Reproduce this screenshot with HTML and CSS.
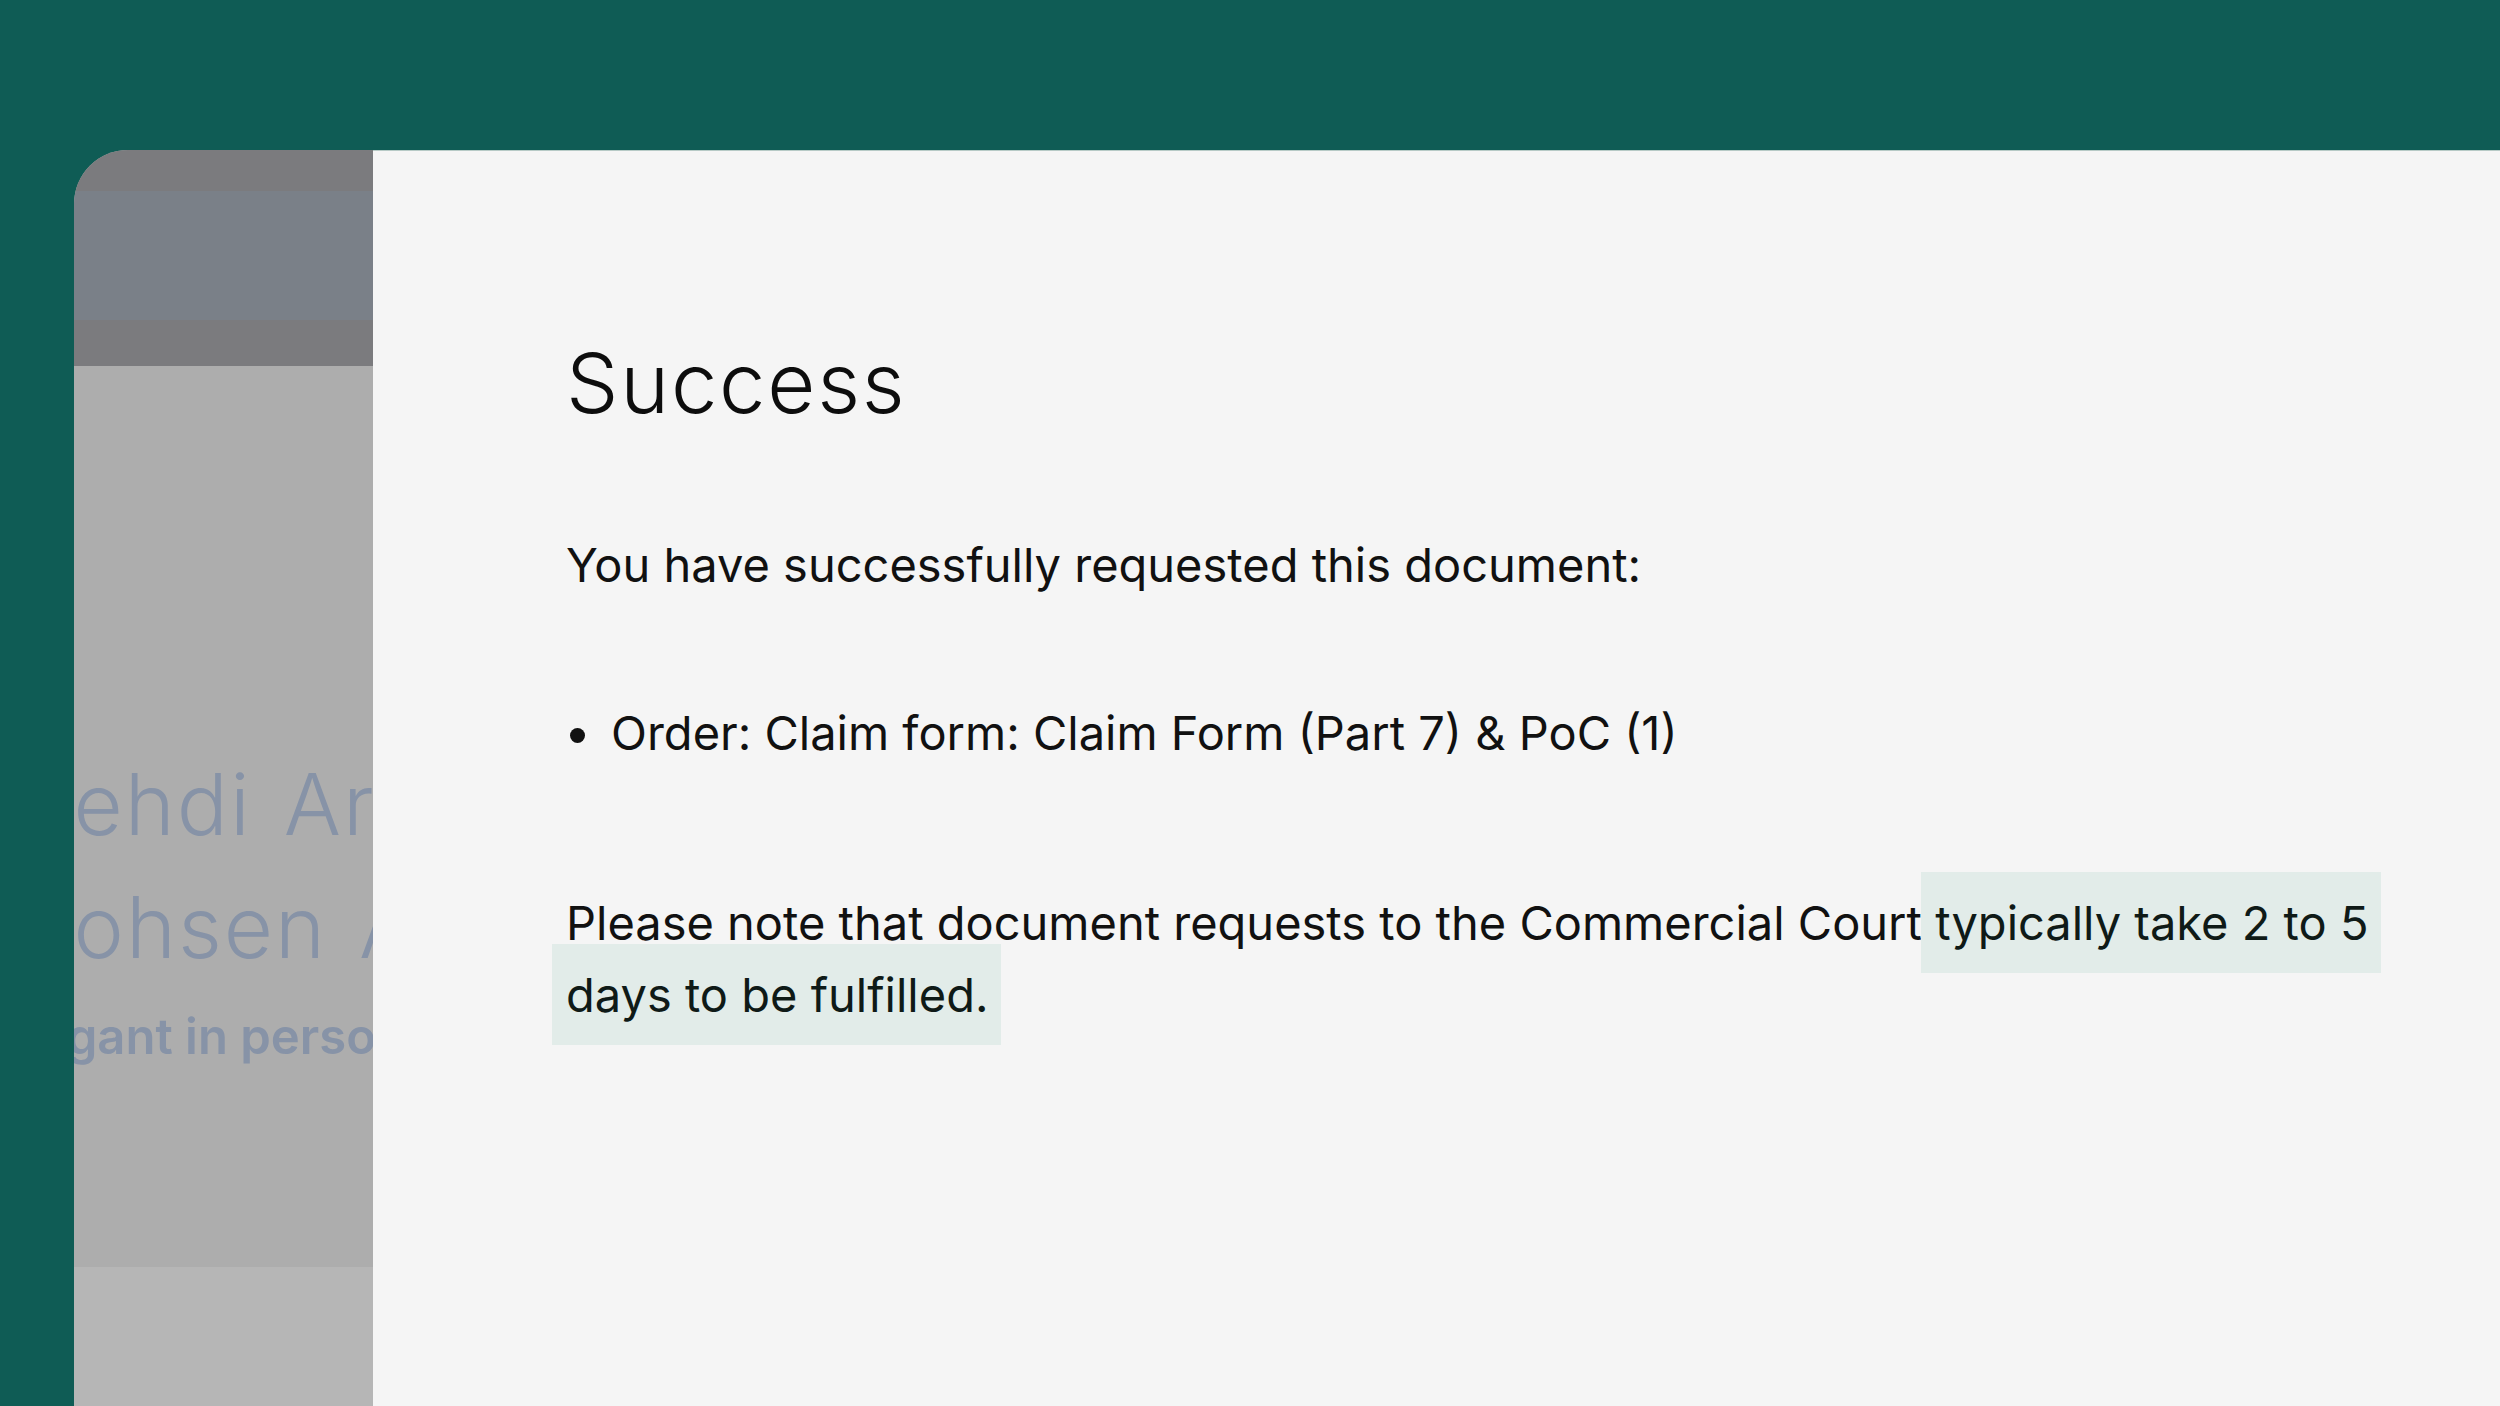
FILE: index.html
```html
<!DOCTYPE html>
<html lang="en">
<head>
<meta charset="utf-8">
<title>Success</title>
<link rel="stylesheet" href="styles.css">
</head>
<body>
<div class="app">
  <div class="frame">
    <aside class="side">
      <div class="band band-a"></div>
      <div class="band band-b"></div>
      <div class="band band-c"></div>
      <div class="side-body">
        <div class="names">
          <div class="name">Mehdi Ar</div>
          <div class="name">Mohsen A</div>
        </div>
        <div class="role">Litigant in person</div>
      </div>
      <div class="side-foot"></div>
    </aside>
    <main class="dialog">
      <h1 class="title">Success</h1>
      <p class="lead">You have successfully requested this document:</p>
      <ul class="docs">
        <li>Order: Claim form: Claim Form (Part 7) &amp; PoC (1)</li>
      </ul>
      <p class="note">Please note that document requests to the Commercial Court <span class="hl">typically take 2 to 5 days to be fulfilled.</span></p>
    </main>
  </div>
</div>
</body>
</html>
```

FILE: styles.css
```css
html, body {
  margin: 0;
  height: 100%;
}

body {
  background: #0f5c55;
  font-family: Inter, "Noto Sans", "Liberation Sans", sans-serif;
  color: #111;
  overflow: hidden;
}

.app {
  height: 1406px;
  box-sizing: border-box;
  padding: 150px 0 0 74px;
  display: flex;
}

.frame {
  flex: 1;
  display: flex;
  border-top-left-radius: 54px;
  overflow: hidden;
}

.side {
  width: 299px;
  flex: none;
  display: flex;
  flex-direction: column;
  background: #adadad;
  overflow: hidden;
}

.band { flex: none; }
.band-a { height: 41px; background: #7b7b7e; }
.band-b { height: 129px; background: #7a8088; }
.band-c { height: 46px; background: #7b7b7e; }

.side-body {
  flex: none;
  height: 901px;
  box-sizing: border-box;
  padding-top: 377px;
  margin-left: -79px;
  white-space: nowrap;
  color: #8793a7;
}

.name {
  font-size: 85px;
  font-weight: 300;
  line-height: 123px;
  letter-spacing: 2px;
  word-spacing: 6px;
}

.role {
  margin-top: 16px;
  margin-left: 1px;
  font-size: 49px;
  font-weight: 600;
  line-height: 64px;
}

.side-foot {
  flex: 1;
  background: #b6b6b6;
}

.dialog {
  flex: 1;
  background: #f5f5f5;
  border-top: 1px solid #b7cac6;
  padding: 191px 0 0 193px;
}

.title {
  margin: 0;
  font-size: 83px;
  font-weight: 300;
  line-height: 82px;
  letter-spacing: 1.8px;
  color: #0d0d0d;
}

.lead {
  margin: 105px 0 0;
  font-size: 47px;
  line-height: 72px;
}

.docs {
  margin: 96px 0 0;
  padding: 0;
  list-style: none;
  font-size: 47px;
  line-height: 72px;
}

.docs li {
  display: flex;
}

.docs li::before {
  content: "";
  flex: none;
  width: 15px;
  height: 15px;
  border-radius: 50%;
  background: #111;
  margin: 31px 26px 0 4px;
}

.note {
  margin: 118px 0 0;
  max-width: 1840px;
  font-size: 47px;
  line-height: 72px;
}

.hl {
  background: #e2ece9;
  color: #0f1a17;
  padding: 22px 0;
  -webkit-box-decoration-break: clone;
  box-decoration-break: clone;
  box-shadow: -14px 0 0 #e2ece9, 13px 0 0 #e2ece9;
}
```
